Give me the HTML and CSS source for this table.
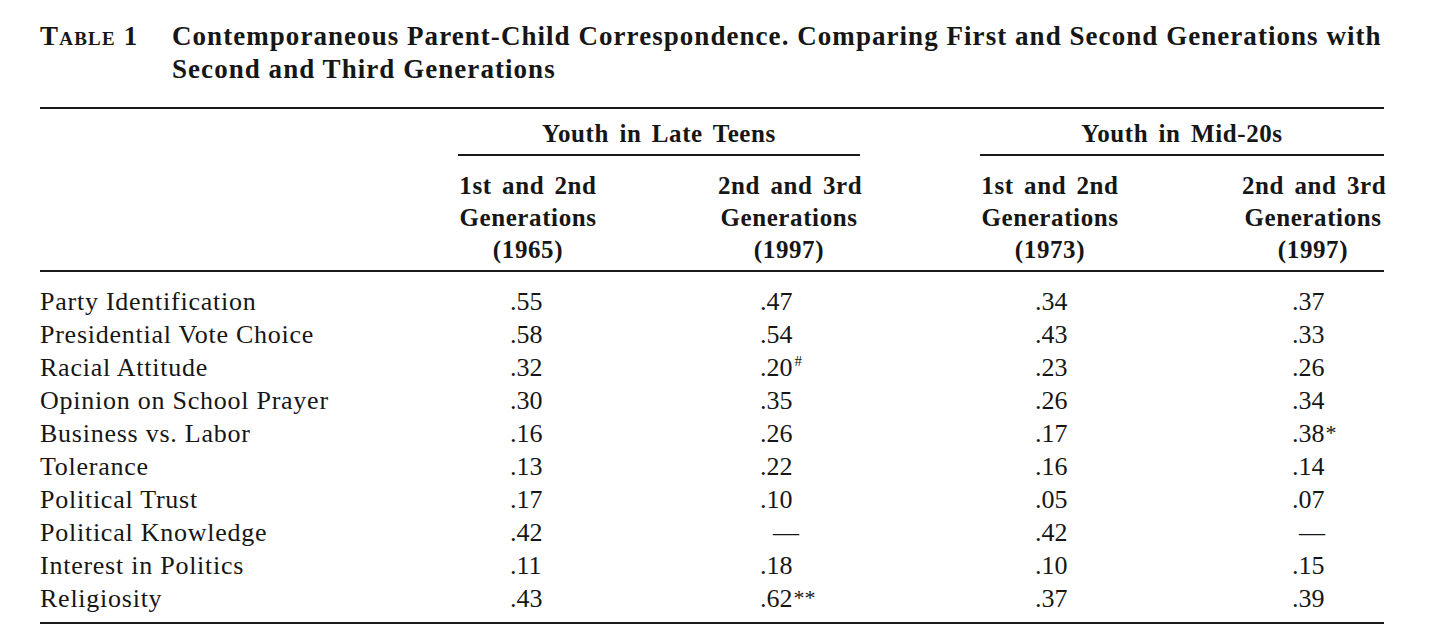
FILE: index.html
```html
<!DOCTYPE html>
<html lang="en">
<head>
<meta charset="utf-8">
<title>Table 1</title>
<link rel="stylesheet" href="styles.css">
</head>
<body>
<div class="page">
  <div class="caption">
    <div class="label">Table 1</div>
    <div class="title">Contemporaneous Parent-Child Correspondence. Comparing First and Second Generations with Second and Third Generations</div>
  </div>

  <div class="table">
    <div class="head">
      <div class="grid groups">
        <div class="group g1">Youth in Late Teens</div>
        <div class="group g2">Youth in Mid-20s</div>
      </div>
      <div class="grid cols">
        <div class="colhead c1">1st and 2nd<br>Generations<br>(1965)</div>
        <div class="colhead c2">2nd and 3rd<br>Generations<br>(1997)</div>
        <div class="colhead c3">1st and 2nd<br>Generations<br>(1973)</div>
        <div class="colhead c4">2nd and 3rd<br>Generations<br>(1997)</div>
      </div>
    </div>

    <div class="body">
      <div class="grid row"><div class="name">Party Identification</div><div class="v c1">.55</div><div class="v c2">.47</div><div class="v c3">.34</div><div class="v c4">.37</div></div>
      <div class="grid row"><div class="name">Presidential Vote Choice</div><div class="v c1">.58</div><div class="v c2">.54</div><div class="v c3">.43</div><div class="v c4">.33</div></div>
      <div class="grid row"><div class="name">Racial Attitude</div><div class="v c1">.32</div><div class="v c2">.20<sup class="note hash">#</sup></div><div class="v c3">.23</div><div class="v c4">.26</div></div>
      <div class="grid row"><div class="name">Opinion on School Prayer</div><div class="v c1">.30</div><div class="v c2">.35</div><div class="v c3">.26</div><div class="v c4">.34</div></div>
      <div class="grid row"><div class="name">Business vs. Labor</div><div class="v c1">.16</div><div class="v c2">.26</div><div class="v c3">.17</div><div class="v c4">.38<sup class="note">*</sup></div></div>
      <div class="grid row"><div class="name">Tolerance</div><div class="v c1">.13</div><div class="v c2">.22</div><div class="v c3">.16</div><div class="v c4">.14</div></div>
      <div class="grid row"><div class="name">Political Trust</div><div class="v c1">.17</div><div class="v c2">.10</div><div class="v c3">.05</div><div class="v c4">.07</div></div>
      <div class="grid row"><div class="name">Political Knowledge</div><div class="v c1">.42</div><div class="v c2 dash">—</div><div class="v c3">.42</div><div class="v c4 dash">—</div></div>
      <div class="grid row"><div class="name">Interest in Politics</div><div class="v c1">.11</div><div class="v c2">.18</div><div class="v c3">.10</div><div class="v c4">.15</div></div>
      <div class="grid row"><div class="name">Religiosity</div><div class="v c1">.43</div><div class="v c2">.62<sup class="note">**</sup></div><div class="v c3">.37</div><div class="v c4">.39</div></div>
    </div>
  </div>
</div>
</body>
</html>
```

FILE: styles.css
```css
html, body {
  margin: 0;
  padding: 0;
  background: #ffffff;
}

body {
  font-family: "Liberation Serif", "Times New Roman", serif;
  color: #161616;
}

.page {
  width: 1344px;
  padding: 20px 56px 0 40px;
}

/* caption */
.caption {
  display: flex;
  align-items: flex-start;
}

.label {
  width: 132px;
  flex: none;
  font-size: 27px;
  line-height: 33px;
  font-variant: small-caps;
  letter-spacing: 1.2px;
  font-weight: bold;
}

.title {
  flex: 1;
  font-size: 27px;
  line-height: 33px;
  font-weight: bold;
  letter-spacing: 1.05px;
}

/* table */
.table {
  margin-top: 21px;
  border-top: 2px solid #1a1a1a;
  border-bottom: 2px solid #1a1a1a;
}

.grid {
  display: grid;
  grid-template-columns: [name] 418px [c1] 140px 120px [c2] 142px 120px [c3] 140px 122px [c4] 142px;
}

.head {
  border-bottom: 2px solid #1a1a1a;
  font-weight: bold;
  font-size: 25px;
  letter-spacing: 0.6px;
  word-spacing: 3.5px;
}

.groups {
  padding-top: 8px;
}

.group {
  text-align: center;
  line-height: 33px;
  padding-bottom: 4px;
  border-bottom: 2px solid #1a1a1a;
}

.g1 { grid-column: c1 / span 3; }
.g2 { grid-column: c3 / span 3; }

.cols {
  padding-top: 14px;
  padding-bottom: 4px;
}

.colhead {
  text-align: center;
  line-height: 32px;
  white-space: nowrap;
}

.c1 { grid-column: c1; }
.c2 { grid-column: c2; }
.c3 { grid-column: c3; }
.c4 { grid-column: c4; }

.body {
  padding-top: 13px;
  padding-bottom: 7px;
  font-size: 26px;
}

.row {
  line-height: 33px;
  height: 33px;
}

.name {
  grid-column: name;
  letter-spacing: 0.75px;
  white-space: nowrap;
}

.v {
  white-space: nowrap;
}

.v.c1 { padding-left: 52px; }
.v.c2 { padding-left: 42px; }
.v.c3 { padding-left: 55px; }
.v.c4 { padding-left: 50px; }

.v.dash { padding-left: 55px; }
.v.c4.dash { padding-left: 57px; }

.note {
  font-size: 22px;
  line-height: 0;
  vertical-align: 2px;
  margin-left: 1px;
}

.note.hash {
  font-size: 15px;
  vertical-align: 10px;
  margin-left: 2px;
}
```
